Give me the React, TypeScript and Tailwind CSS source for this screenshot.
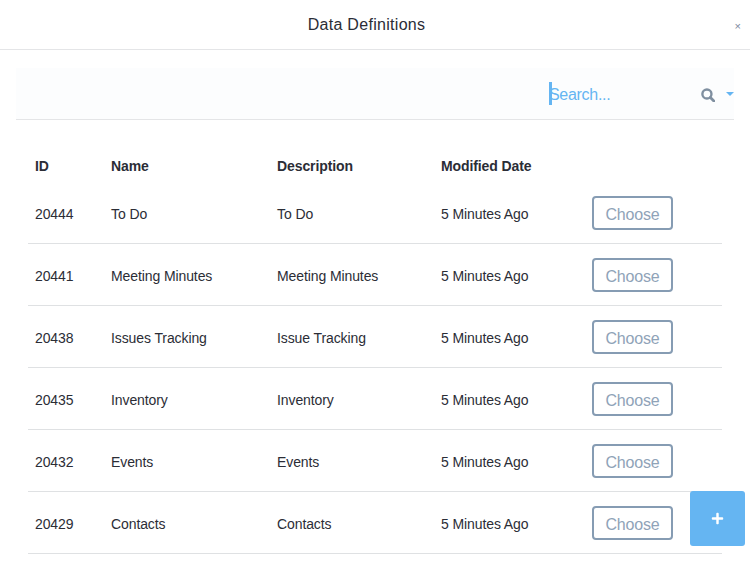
import { FaPlus } from "react-icons/fa";

type Definition = {
  id: number;
  name: string;
  description: string;
  modified: string;
};

const ROWS: Definition[] = [
  { id: 20444, name: "To Do", description: "To Do", modified: "5 Minutes Ago" },
  { id: 20441, name: "Meeting Minutes", description: "Meeting Minutes", modified: "5 Minutes Ago" },
  { id: 20438, name: "Issues Tracking", description: "Issue Tracking", modified: "5 Minutes Ago" },
  { id: 20435, name: "Inventory", description: "Inventory", modified: "5 Minutes Ago" },
  { id: 20432, name: "Events", description: "Events", modified: "5 Minutes Ago" },
  { id: 20429, name: "Contacts", description: "Contacts", modified: "5 Minutes Ago" },
];

export default function App() {
  return (
    <div className="relative h-[562px] w-[750px] overflow-hidden bg-white font-['Liberation_Sans',sans-serif] text-[#2b2d36]">
      <header className="relative flex h-[50px] items-center justify-center border-b border-[#e4e5e7]">
        <h1 className="mr-[17px] text-[16px] tracking-[0.3px]">Data Definitions</h1>
        <span className="absolute right-[9px] top-[20px] text-[11px] leading-[12px] text-[#7b8a9e]">×</span>
      </header>

      <div className="mx-[16px] mt-[18px] flex h-[52px] items-center border-b border-[#e4e5e7] bg-[#fcfdfe]">
        <div className="ml-[533px] flex h-[23px] w-[154px] items-center">
          <span className="h-[23px] w-[3px] bg-[#65b5f2]" />
          <span className="ml-[-3px] mt-[3px] text-[16px] tracking-[-0.3px] text-[#65b5f2]">Search...</span>
        </div>
        <svg viewBox="0 0 14 14" className="mt-[2px] h-[14px] w-[14px] text-[#7f8fa0]" fill="none" stroke="currentColor">
          <circle cx="6" cy="6" r="4.6" strokeWidth="2.4" />
          <path d="M9.5 9.5 13 13" strokeWidth="2.8" strokeLinecap="round" />
        </svg>
        <span className="ml-[11px] h-0 w-0 border-x-[4px] border-t-[4px] border-x-transparent border-t-[#65b5f2]" />
      </div>

      <table className="mx-[28px] mt-[23px] w-[694px] table-fixed border-separate border-spacing-0 text-[14px] tracking-[-0.1px]">
        <colgroup>
          <col className="w-[76px]" />
          <col className="w-[166px]" />
          <col className="w-[164px]" />
          <col className="w-[151px]" />
          <col />
        </colgroup>
        <thead>
          <tr className="h-[39px] text-left">
            <th className="pl-[7px] pt-[13px] align-top font-bold">ID</th>
            <th className="pl-[7px] pt-[13px] align-top font-bold">Name</th>
            <th className="pl-[7px] pt-[13px] align-top font-bold">Description</th>
            <th className="pl-[7px] pt-[13px] align-top font-bold">Modified Date</th>
            <th />
          </tr>
        </thead>
        <tbody>
          {ROWS.map((r) => (
            <tr key={r.id} className="h-[62px]">
              <td className="border-b border-[#dfe1e3] pl-[7px] pt-[3px]">{r.id}</td>
              <td className="border-b border-[#dfe1e3] pl-[7px] pt-[3px]">{r.name}</td>
              <td className="border-b border-[#dfe1e3] pl-[7px] pt-[3px]">{r.description}</td>
              <td className="border-b border-[#dfe1e3] pl-[7px] pt-[3px]">{r.modified}</td>
              <td className="border-b border-[#dfe1e3] pt-[1px]">
                <button className="ml-[7px] block h-[34px] w-[81px] rounded-[4px] border-2 border-[#869cb3] pt-[3px] text-[16px] tracking-[-0.2px] text-[#8fa3b8]">
                  Choose
                </button>
              </td>
            </tr>
          ))}
        </tbody>
      </table>

      <button className="absolute left-[690px] top-[491px] flex h-[55px] w-[55px] items-center justify-center rounded-[3px] bg-[#65b5f2] text-white">
        <FaPlus className="h-[13px] w-[13px]" />
      </button>
    </div>
  );
}
